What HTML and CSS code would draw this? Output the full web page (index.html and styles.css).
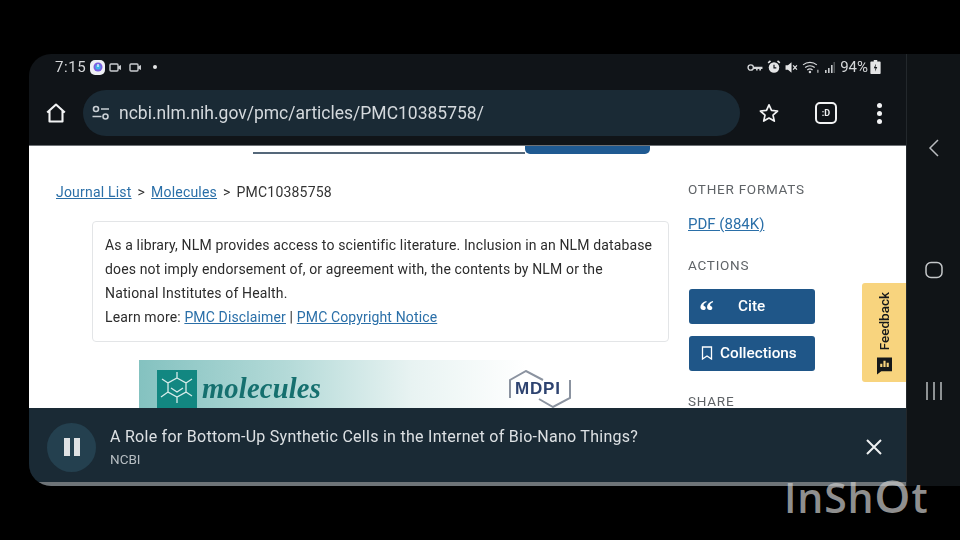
FILE: index.html
```html
<!DOCTYPE html>
<html lang="en">
<head>
<meta charset="utf-8">
<title>PMC10385758</title>
<link rel="stylesheet" href="styles.css">
</head>
<body>
<div class="device">
  <div class="screen">
    <div class="status">
      <div class="status-left">
        <span class="time">7:15</span>
        <span class="app-badge"><svg width="10" height="10" viewBox="0 0 10 10"><circle cx="5" cy="5" r="4.5" fill="#7a5fe0"/><circle cx="5" cy="5" r="2.6" fill="#3fb4e8"/><path d="M5 2v3" stroke="#fff" stroke-width="1.2"/></svg></span>
        <svg class="cam" width="13" height="9" viewBox="0 0 13 9"><rect x="1" y="1" width="8" height="7" rx="1" fill="none" stroke="#c9cccf" stroke-width="1.4"/><path d="M9 3.5l3-1.5v5l-3-1.5z" fill="#c9cccf"/></svg>
        <svg class="cam" width="13" height="9" viewBox="0 0 13 9"><rect x="1" y="1" width="8" height="7" rx="1" fill="none" stroke="#c9cccf" stroke-width="1.4"/><path d="M9 3.5l3-1.5v5l-3-1.5z" fill="#c9cccf"/></svg>
        <span class="dot"></span>
      </div>
      <div class="status-right">
        <svg width="16" height="9" viewBox="0 0 15 8"><circle cx="3.5" cy="4" r="2.5" fill="none" stroke="#d5d7d9" stroke-width="1.3"/><path d="M6 3.4h8.5v2h-1.4v1.4h-1.6V5.4H10v1.4H8.5V5.4H6z" fill="#d5d7d9"/></svg>
        <svg width="14" height="14" viewBox="0 0 12 12"><path d="M1 2.500L3 .8M11 2.500L9 .8" stroke="#e4e5e6" stroke-width="1.4"/><circle cx="6" cy="6.500" r="4.500" fill="#e4e5e6"/><path d="M6 4v2.700h2" stroke="#101418" stroke-width="1" fill="none"/></svg>
        <svg width="13" height="13" viewBox="0 0 12 12"><path d="M.5 4h2.200L6 1.200v9.600L2.700 8H.5z" fill="#e4e5e6"/><path d="M7.500 4l3.500 4M11 4L7.500 8" stroke="#e4e5e6" stroke-width="1.200"/></svg>
        <svg width="18" height="14" viewBox="0 0 17 13"><path d="M1 4.500a10 10 0 0 1 13 0M3 7a7 7 0 0 1 9 0M5 9.300a4 4 0 0 1 5 0" fill="none" stroke="#d5d7d9" stroke-width="1.200"/><circle cx="7.500" cy="11.300" r="1.200" fill="#d5d7d9"/><path d="M15 9v3" stroke="#d5d7d9"/></svg>
        <svg width="11" height="11" viewBox="0 0 11 11"><path d="M1 8h1.600v3H1zM4 6h1.600v5H4zM7 3h1.600v8H7z" fill="#c9cccf"/><path d="M9.600 0h1.200v11H9.600z" fill="#5d6164"/></svg>
        <span class="battery-text">94%</span>
        <svg class="battery" width="11" height="14" viewBox="0 0 9 12"><path d="M3 0h3v1.300h2.200a.7.7 0 0 1 .7.7v9.300a.7.7 0 0 1-.7.7H.8a.7.7 0 0 1-.7-.7V2a.7.7 0 0 1 .7-.7H3z" fill="#e4e5e6"/><path d="M5 3L3 7h1.500L4 10l2-4H4.500z" fill="#101418"/></svg>
      </div>
    </div>
    <div class="toolbar">
      <svg class="home" width="24" height="24" viewBox="0 0 24 24"><path d="M3.200 11.500L12 3.500l8.800 8M5.500 9.800V20.500h13V9.800" fill="none" stroke="#f2f3f4" stroke-width="2.100" stroke-linejoin="round"/></svg>
      <div class="omnibox">
        <svg width="20" height="18" viewBox="0 0 20 18"><circle cx="5" cy="5" r="2.500" fill="none" stroke="#c9cfd4" stroke-width="1.600"/><path d="M10 5h8M1.500 12.500h9" stroke="#c9cfd4" stroke-width="1.600"/><circle cx="14.500" cy="12.500" r="2.500" fill="none" stroke="#c9cfd4" stroke-width="1.600"/></svg>
        <span class="url">ncbi.nlm.nih.gov/pmc/articles/PMC10385758/</span>
      </div>
      <svg class="star" width="22" height="22" viewBox="0 0 22 22"><path d="M11 2.800l2.500 5.600 6.100.6-4.600 4.100 1.300 6-5.300-3.100-5.300 3.100 1.300-6L2.400 9l6.100-.6z" fill="none" stroke="#f2f3f4" stroke-width="1.700" stroke-linejoin="round"/></svg>
      <div class="tab-count">:D</div>
      <div class="menu-dots"><i></i><i></i><i></i></div>
    </div>
    <div class="page">
      <div class="search-strip"><div class="search-field"></div><div class="search-button"></div></div>
      <div class="columns">
        <div class="content">
          <nav class="crumbs"><a>Journal List</a><span class="sep">&gt;</span><a>Molecules</a><span class="sep">&gt;</span><span>PMC10385758</span></nav>
          <div class="notice">
            <p>As a library, NLM provides access to scientific literature. Inclusion in an NLM database does not imply endorsement of, or agreement with, the contents by NLM or the National Institutes of Health.</p>
            <p>Learn more: <a>PMC Disclaimer</a> | <a>PMC Copyright Notice</a></p>
          </div>
          <div class="banner">
            <span class="journal-logo"><svg width="40" height="38" viewBox="0 0 40 38"><path d="M20 8l9 5v9l-9 5-9-5v-9zM11 22l-7 5M29 13l6-4M20 8V2M29 22l6 4M11 13L5 9M20 27v6M14 18l6 4 6-4" fill="none" stroke="#d6ecea" stroke-width="1.300"/></svg></span>
            <span class="journal-name">molecules</span>
            <span class="mdpi">
              <svg class="mdpi-hex" width="62" height="38" viewBox="0 0 62 38"><path d="M1 28V10L17 1l17 9M61 10v18L44 37 30 29" fill="none" stroke="#8b93a0" stroke-width="2"/></svg>
              <span class="mdpi-text">MDPI</span>
            </span>
          </div>
        </div>
        <aside class="side">
          <h3 class="side-head">OTHER FORMATS</h3>
          <a class="pdf">PDF (884K)</a>
          <h3 class="side-head actions">ACTIONS</h3>
          <div class="btn cite"><span class="quote">&#8220;</span><span>Cite</span></div>
          <div class="btn collect"><svg width="12" height="14" viewBox="0 0 12 14"><path d="M1.500 1h9v12L6 10 1.500 13z" fill="none" stroke="#fff" stroke-width="1.300"/></svg><span>Collections</span></div>
          <h3 class="side-head share">SHARE</h3>
        </aside>
      </div>
      <div class="feedback"><svg width="15" height="18" viewBox="0 0 14 16"><path d="M0 0h14v13H4l-4 3z" fill="#15181a"/><path d="M3 9V6h2v3zM6 9V3h2v6zM9 9V5h2v4z" fill="#f8d47e"/></svg><span>Feedback</span></div>
    </div>
    <div class="player">
      <div class="pause"><i></i><i></i></div>
      <div class="player-text">
        <div class="player-title">A Role for Bottom-Up Synthetic Cells in the Internet of Bio-Nano Things?</div>
        <div class="player-source">NCBI</div>
      </div>
      <svg class="close" width="18" height="18" viewBox="0 0 18 18"><path d="M2 2l14 14M16 2L2 16" stroke="#eef0f1" stroke-width="2"/></svg>
    </div>
    <div class="progress"></div>
  </div>
  <div class="navbar">
    <svg width="14" height="20" viewBox="0 0 14 20"><path d="M11 2L3 10l8 8" fill="none" stroke="#b9bcbf" stroke-width="1.500"/></svg>
    <svg width="18" height="18" viewBox="0 0 18 18"><rect x="1" y="1.500" width="16" height="15" rx="5" fill="none" stroke="#c5c8ca" stroke-width="1.500"/></svg>
    <svg width="18" height="18" viewBox="0 0 18 18"><path d="M2 0v18M9 0v18M16 0v18" stroke="#b9bcbf" stroke-width="1.500"/></svg>
  </div>
</div>
<div class="watermark">InSh<span class="wm-o">O</span>t</div>
</body>
</html>
```
FILE: styles.css
```css
* { box-sizing: border-box; }
html, body { margin: 0; height: 100%; }
body {
  width: 960px;
  height: 540px;
  overflow: hidden;
  background: #000;
  padding: 54px 0 0 29px;
  font-family: Roboto, "Liberation Sans", sans-serif;
  position: relative;
}
h3, p { margin: 0; font-weight: 400; }
a { color: #2a6fa8; text-decoration: underline; }
svg { display: block; flex: none; }

.device { display: flex; width: 931px; height: 432px; background: #101418; border-radius: 22px 0 0 22px; overflow: hidden; filter: blur(.45px); }
.screen { width: 877px; display: flex; flex-direction: column; }
.navbar { width: 54px; background: #101417; border-left: 1px solid #23282c; display: flex; flex-direction: column; align-items: center; gap: 103px; padding-top: 84px; }

.status { height: 36px; display: flex; justify-content: space-between; align-items: center; padding: 0 25px 10px 26px; color: #d5d7d9; flex: none; }
.status-left, .status-right { display: flex; align-items: center; }
.time { font-size: 15px; letter-spacing: .6px; margin-right: 4px; }
.app-badge { width: 15px; height: 15px; background: #eef0f4; border-radius: 5px; display: flex; align-items: center; justify-content: center; margin-right: 4px; }
.cam { margin-right: 7px; }
.dot { width: 4px; height: 4px; border-radius: 50%; background: #e4e5e6; margin-left: 4px; }
.status-right { gap: 4px; }
.battery-text { font-size: 15px; margin-left: 1px; }
.battery { margin-left: -2px; }

.toolbar { height: 55px; display: flex; align-items: center; flex: none; padding-bottom: 9px; }
.home { margin-left: 15px; }
.omnibox { width: 657px; height: 46px; margin-left: 15px; border-radius: 23px; background: #1a2a35; display: flex; align-items: center; padding-left: 8px; gap: 8px; }
.url { font-size: 17.5px; color: #d4d9dd; white-space: nowrap; }
.star { margin-left: 18px; }
.tab-count { width: 22px; height: 22px; margin-left: 35px; border: 2px solid #f2f3f4; border-radius: 5px; color: #f2f3f4; font-size: 9px; font-weight: 700; display: flex; align-items: center; justify-content: center; }
.menu-dots { margin-left: 40px; display: flex; flex-direction: column; gap: 3px; }
.menu-dots i { width: 5px; height: 5px; background: #f2f3f4; border-radius: 50%; display: block; }

.page { height: 263px; flex: none; background: #fff; position: relative; overflow: hidden; border-top: 1px solid #6e7276; }
.search-strip { display: flex; margin-left: 224px; width: 397px; height: 8px; }
.search-field { width: 272px; border-bottom: 2px solid #55687a; }
.search-button { width: 125px; background: #1f5a92; border-radius: 0 0 5px 5px; }
.columns { display: flex; }
.content { width: 659px; padding: 0 0 0 27px; flex: none; }
.crumbs { font-size: 14px; color: #333; display: flex; margin-top: 29px; height: 18px; align-items: center; letter-spacing: .2px; }
.sep { margin: 0 6px; }
.notice { margin: 20px 0 0 36px; width: 577px; height: 121px; border: 1px solid #e3e5e7; border-radius: 4px; padding: 11px 12px; font-size: 14px; line-height: 24px; letter-spacing: .14px; color: #2c2c2c; }
.banner { margin: 18px 0 0 83px; width: 496px; height: 48px; background: linear-gradient(90deg, #84c2c0 0, #b4dad8 30%, #e8f3f2 55%, #fff 78%); display: flex; align-items: flex-start; padding-left: 18px; }
.journal-logo { width: 40px; height: 38px; background: #128781; margin-top: 10px; overflow: hidden; }
.journal-name { font-family: "Liberation Serif", serif; font-style: italic; font-weight: 700; font-size: 28.5px; color: #15706f; margin: 13px 0 0 5px; letter-spacing: .2px; }
.mdpi { position: relative; margin: 10px 0 0 188px; width: 62px; height: 38px; }
.mdpi-hex { position: absolute; left: 0; top: 0; }
.mdpi-text { position: absolute; left: 6px; top: 12px; font-family: "Liberation Sans", sans-serif; font-weight: 700; font-size: 17px; line-height: 14px; letter-spacing: .8px; color: #2e4370; }

.side { flex: none; width: 190px; padding-top: 27px; }
.side-head { font-size: 13.5px; letter-spacing: .75px; color: #5f6367; line-height: 16px; }
.pdf { display: block; font-size: 15px; margin-top: 18px; line-height: 18px; }
.actions { margin-top: 24px; }
.btn { width: 126px; height: 35px; margin-left: 1px; padding-bottom: 2px; background: #1f5688; border-radius: 3px; color: #fff; font-weight: 500; font-size: 15.3px; display: flex; align-items: center; }
.cite { margin-top: 16px; padding-left: 10px; }
.quote { font-family: "Liberation Serif", serif; font-size: 30px; font-weight: 700; line-height: 30px; height: 20px; width: 39px; }
.collect { margin-top: 12px; padding-left: 12px; gap: 7px; }
.share { margin-top: 23px; line-height: 14px; }
.feedback { position: absolute; right: 0; top: 137px; width: 44px; height: 99px; background: #f8d47e; border-radius: 3px 0 0 3px; display: flex; flex-direction: column-reverse; align-items: center; padding: 0 0 7px; gap: 7px; }
.feedback span { writing-mode: vertical-rl; transform: rotate(180deg); font-size: 13.5px; font-weight: 500; color: #15181a; }

.player { height: 74px; flex: none; background: #1a2a35; display: flex; align-items: center; padding-top: 4px; }
.pause { width: 49px; height: 49px; border-radius: 50%; background: #24404f; margin-left: 18px; display: flex; align-items: center; justify-content: center; gap: 4px; }
.pause i { width: 6px; height: 18px; background: #dfe2e4; display: block; }
.player-text { margin-left: 14px; flex: 1; }
.player-title { font-size: 16px; letter-spacing: .27px; color: #dce0e3; }
.player-source { font-size: 13.5px; color: #b6bdc2; margin-top: 5px; }
.close { margin-right: 23px; }
.progress { height: 4px; background: #6e7478; flex: none; }

.watermark { position: absolute; left: 784px; top: 470px; font-family: "Open Sans", sans-serif; font-weight: 600; font-size: 41px; line-height: 50px; color: rgba(200,200,200,.72); letter-spacing: .8px; white-space: nowrap; }
.wm-o { font-size: 46px; }
```
